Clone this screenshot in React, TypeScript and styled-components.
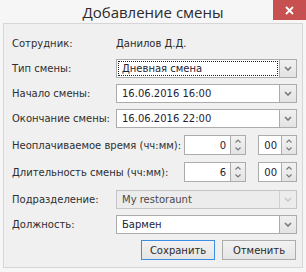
import styled, { createGlobalStyle } from 'styled-components';

const GlobalStyle = createGlobalStyle`
  html, body {
    margin: 0;
    padding: 0;
    background: #f6f6f6;
  }
  body {
    font-family: "DejaVu Sans", "Liberation Sans", sans-serif;
  }
`;

// Window
const Window = styled.div`
  width: 306px;
  height: 272px;
  background: #f6f6f6;
  display: flex;
  flex-direction: column;
  box-sizing: border-box;
`;

const TitleBar = styled.div`
  height: 23px;
  position: relative;
  display: flex;
  align-items: center;
  justify-content: center;
`;

const Title = styled.div`
  font-family: "Open Sans", "Noto Sans", sans-serif;
  font-size: 15px;
  color: #2b2b2b;
`;

const CloseButton = styled.div`
  position: absolute;
  top: 0;
  right: 0;
  width: 33px;
  height: 20px;
  background: #c75050;
  display: flex;
  align-items: center;
  justify-content: center;
`;

const Panel = styled.div`
  margin: 0 3px;
  flex: 1;
  margin-bottom: 4px;
  border: 1px solid #d6d6d6;
  background: #f0f0f0;
  padding: 10px 5px 0 8px;
  display: flex;
  flex-direction: column;
`;

// Rows
const Row = styled.div<{ $mt?: number; $h?: number }>`
  display: flex;
  align-items: center;
  justify-content: space-between;
  height: ${(p) => p.$h ?? 19}px;
  margin-top: ${(p) => p.$mt ?? 6}px;
  &:first-child {
    margin-top: 0;
  }
`;

const Label = styled.span`
  font-size: 10px;
  color: #2e2e2e;
  white-space: nowrap;
`;

const Value = styled.span`
  width: 181px;
  font-size: 10px;
  color: #2a2a2a;
`;

// Select-like field
const Field = styled.div<{ $disabled?: boolean }>`
  width: 181px;
  height: 19px;
  display: flex;
  box-sizing: border-box;
  border: 1px solid ${(p) => (p.$disabled ? '#c4c4c4' : '#acacac')};
  background: ${(p) => (p.$disabled ? '#ececec' : '#fff')};
`;

const FieldText = styled.div<{ $focus?: boolean; $disabled?: boolean }>`
  flex: 1;
  font-size: 10px;
  color: ${(p) => (p.$disabled ? '#4a4a4a' : '#1f2233')};
  display: flex;
  align-items: center;
  padding-left: 3px;
  margin: 1px;
  border: 1px dotted ${(p) => (p.$focus ? '#222' : 'transparent')};
  white-space: nowrap;
  overflow: hidden;
`;

const DropButton = styled.div<{ $disabled?: boolean }>`
  width: 16px;
  border-left: 1px solid ${(p) => (p.$disabled ? '#d0d0d0' : '#acacac')};
  background: ${(p) => (p.$disabled ? '#ececec' : 'linear-gradient(#f0f0f0, #e3e3e3)')};
  display: flex;
  align-items: center;
  justify-content: center;
`;

// Numeric spinner fields
const SpinGroup = styled.div`
  display: flex;
  align-items: center;
  gap: 12px;
`;

const Spin = styled.div`
  display: flex;
  height: 20px;
`;

const NumBox = styled.div<{ $w: number }>`
  width: ${(p) => p.$w}px;
  box-sizing: border-box;
  border: 1px solid #acacac;
  border-right: none;
  background: #fff;
  font-size: 10px;
  color: #1f2233;
  display: flex;
  align-items: center;
  justify-content: flex-end;
  padding-right: 4px;
`;

const SpinButtons = styled.div`
  width: 16px;
  box-sizing: border-box;
  border: 1px solid #acacac;
  background: linear-gradient(#f2f2f2, #e4e4e4);
  display: flex;
  flex-direction: column;
  align-items: center;
  justify-content: space-evenly;
`;

// Buttons
const ButtonRow = styled.div`
  display: flex;
  justify-content: flex-end;
  gap: 7px;
  margin-top: 6px;
  padding-right: 1px;
`;

const Button = styled.button<{ $primary?: boolean }>`
  width: 74px;
  height: 20px;
  padding: 0;
  font-family: "DejaVu Sans", "Liberation Sans", sans-serif;
  font-size: 10px;
  color: #2a2a2a;
  border: 1px solid ${(p) => (p.$primary ? '#3c8fe0' : '#acacac')};
  background: linear-gradient(#f2f2f2, #e5e5e5);
`;

const Chevron = ({ color = '#777' }: { color?: string }) => (
  <svg width="8" height="5" viewBox="0 0 8 5">
    <path d="M1 1 L4 4 L7 1" fill="none" stroke={color} strokeWidth="1.6" />
  </svg>
);

const Caret = ({ up }: { up?: boolean }) => (
  <svg width="6" height="4" viewBox="0 0 6 4">
    <path
      d={up ? 'M0.5 3.5 L3 1 L5.5 3.5' : 'M0.5 0.5 L3 3 L5.5 0.5'}
      fill="none"
      stroke="#7a7a7a"
      strokeWidth="1.2"
    />
  </svg>
);

const SelectField = ({ text, focus, disabled }: { text: string; focus?: boolean; disabled?: boolean }) => (
  <Field $disabled={disabled}>
    <FieldText $focus={focus} $disabled={disabled}>{text}</FieldText>
    <DropButton $disabled={disabled}>
      <Chevron color={disabled ? '#c8c8c8' : '#777'} />
    </DropButton>
  </Field>
);

const TimeSpin = ({ hours, minutes }: { hours: string; minutes: string }) => (
  <SpinGroup>
    <Spin>
      <NumBox $w={46}>{hours}</NumBox>
      <SpinButtons>
        <Caret up />
        <Caret />
      </SpinButtons>
    </Spin>
    <Spin>
      <NumBox $w={23}>{minutes}</NumBox>
      <SpinButtons>
        <Caret up />
        <Caret />
      </SpinButtons>
    </Spin>
  </SpinGroup>
);

export default function App() {
  return (
    <Window>
      <GlobalStyle />
      <TitleBar>
        <Title>Добавление смены</Title>
        <CloseButton>
          <svg width="9" height="9" viewBox="0 0 9 9">
            <path d="M1 1 L8 8 M8 1 L1 8" stroke="#fff" strokeWidth="1.8" />
          </svg>
        </CloseButton>
      </TitleBar>
      <Panel>
        <Row>
          <Label>Сотрудник:</Label>
          <Value>Данилов Д.Д.</Value>
        </Row>
        <Row>
          <Label>Тип смены:</Label>
          <SelectField text="Дневная смена" focus />
        </Row>
        <Row>
          <Label>Начало смены:</Label>
          <SelectField text="16.06.2016 16:00" />
        </Row>
        <Row>
          <Label>Окончание смены:</Label>
          <SelectField text="16.06.2016 22:00" />
        </Row>
        <Row $mt={7} $h={20}>
          <Label>Неоплачиваемое время (чч:мм):</Label>
          <TimeSpin hours="0" minutes="00" />
        </Row>
        <Row $mt={7} $h={20}>
          <Label>Длительность смены (чч:мм):</Label>
          <TimeSpin hours="6" minutes="00" />
        </Row>
        <Row $mt={8}>
          <Label>Подразделение:</Label>
          <SelectField text="My restoraunt" disabled />
        </Row>
        <Row>
          <Label>Должность:</Label>
          <SelectField text="Бармен" />
        </Row>
        <ButtonRow>
          <Button $primary>Сохранить</Button>
          <Button>Отменить</Button>
        </ButtonRow>
      </Panel>
    </Window>
  );
}
